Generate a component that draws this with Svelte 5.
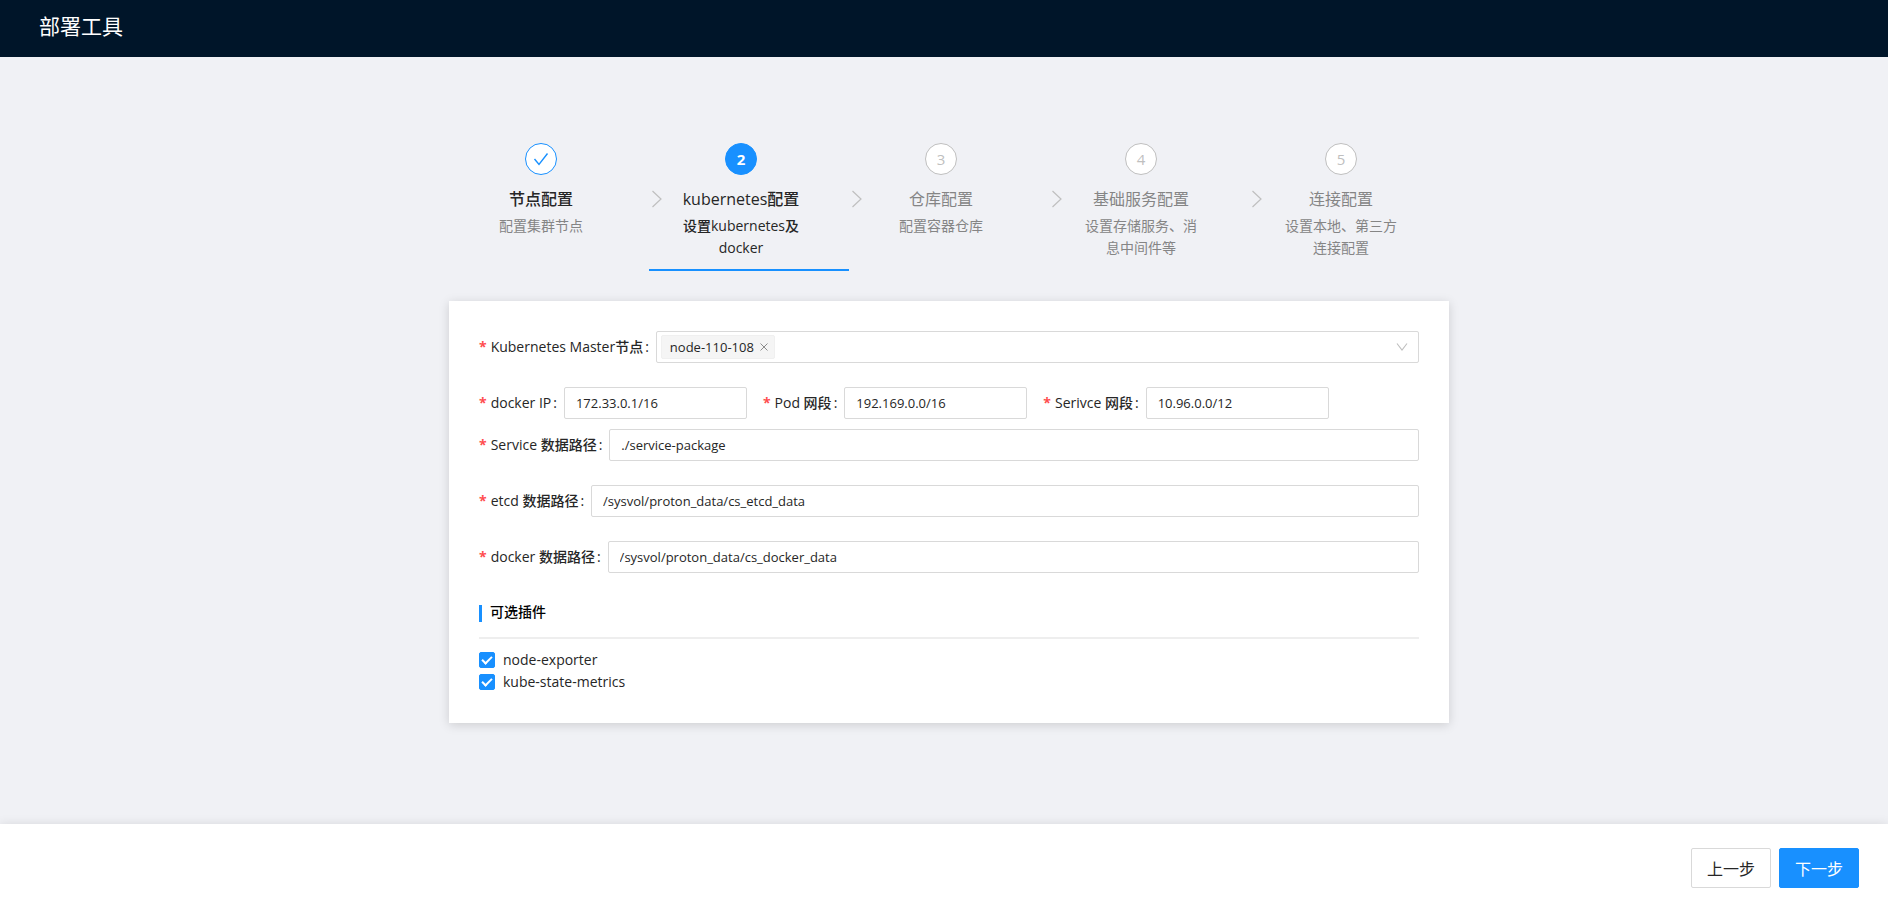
<script lang="ts">
  type Step = { title: string; desc: string };

  const steps: Step[] = [
    { title: '节点配置', desc: '配置集群节点' },
    { title: 'kubernetes配置', desc: '设置kubernetes及docker' },
    { title: '仓库配置', desc: '配置容器仓库' },
    { title: '基础服务配置', desc: '设置存储服务、消息中间件等' },
    { title: '连接配置', desc: '设置本地、第三方连接配置' }
  ];

  const nodes = ['node-110-108', 'node-110-109', 'node-110-110'];

  let current = $state(1);
  let masters = $state(['node-110-108']);

  let networks = $state([
    { id: 'docker-ip', label: 'docker IP', value: '172.33.0.1/16' },
    { id: 'pod-cidr', label: 'Pod 网段', value: '192.169.0.0/16' },
    { id: 'service-cidr', label: 'Serivce 网段', value: '10.96.0.0/12' }
  ]);

  let paths = $state([
    { id: 'service-path', label: 'Service 数据路径', value: './service-package' },
    { id: 'etcd-path', label: 'etcd 数据路径', value: '/sysvol/proton_data/cs_etcd_data' },
    { id: 'docker-path', label: 'docker 数据路径', value: '/sysvol/proton_data/cs_docker_data' }
  ]);

  let plugins = $state([
    { name: 'node-exporter', checked: true },
    { name: 'kube-state-metrics', checked: true }
  ]);

  function status(i: number) {
    if (i < current) return 'finish';
    return i === current ? 'process' : 'wait';
  }

  function removeMaster(name: string) {
    masters = masters.filter((m) => m !== name);
  }

  function addMaster(e: Event) {
    const select = e.currentTarget as HTMLSelectElement;
    if (select.value && !masters.includes(select.value)) {
      masters = [...masters, select.value];
    }
    select.value = '';
  }

  function prev() {
    current = Math.max(0, current - 1);
  }

  function next() {
    current = Math.min(steps.length - 1, current + 1);
  }
</script>

<div class="layout">
  <header class="header">
    <h1>部署工具</h1>
  </header>

  <main class="main">
    <ol class="steps">
      {#each steps as step, i}
        <li class="step {status(i)}">
          {#if i > 0}
            <svg class="step-arrow" width="12" height="18" viewBox="0 0 12 18" fill="none">
              <path d="M1.5 1l8.5 8-8.5 8" stroke="currentColor" stroke-width="1.2" />
            </svg>
          {/if}
          <div class="step-body">
            <span class="step-icon">
              {#if i < current}
                <svg width="16" height="16" viewBox="0 0 16 16" fill="none">
                  <path d="M1.5 8l4.5 5.5L14.5 2.5" stroke="currentColor" stroke-width="1.4" />
                </svg>
              {:else}
                {i + 1}
              {/if}
            </span>
            <div class="step-title">{step.title}</div>
            <div class="step-desc">{step.desc}</div>
          </div>
        </li>
      {/each}
    </ol>

    <form class="card" onsubmit={(e) => e.preventDefault()}>
      <div class="field">
        <label for="masters">Kubernetes Master节点</label>
        <div class="multi-select">
          {#each masters as name}
            <span class="tag">
              {name}
              <button type="button" aria-label="移除 {name}" onclick={() => removeMaster(name)}>
                <svg width="8" height="8" viewBox="0 0 8 8" fill="none">
                  <path d="M0.5 0.5l7 7M7.5 0.5l-7 7" stroke="currentColor" />
                </svg>
              </button>
            </span>
          {/each}
          <select id="masters" onchange={addMaster}>
            <option value=""></option>
            {#each nodes as node}
              <option value={node}>{node}</option>
            {/each}
          </select>
          <svg class="chevron" width="12" height="12" viewBox="0 0 12 12" fill="none">
            <path d="M1 2.5l5 6.5 5-6.5" stroke="currentColor" stroke-width="1.1" />
          </svg>
        </div>
      </div>

      <div class="inline-fields">
        {#each networks as item}
          <div class="field">
            <label for={item.id}>{item.label}</label>
            <input id={item.id} type="text" bind:value={item.value} />
          </div>
        {/each}
      </div>

      {#each paths as item}
        <div class="field">
          <label for={item.id}>{item.label}</label>
          <input id={item.id} type="text" bind:value={item.value} />
        </div>
      {/each}

      <h2>可选插件</h2>
      <div class="plugins">
        {#each plugins as plugin}
          <label class="checkbox">
            <input type="checkbox" bind:checked={plugin.checked} />
            {plugin.name}
          </label>
        {/each}
      </div>
    </form>
  </main>

  <footer class="footer">
    <button class="btn" type="button" onclick={prev}>上一步</button>
    <button class="btn primary" type="button" onclick={next}>下一步</button>
  </footer>
</div>

<style>
  :global(body) {
    margin: 0;
  }

  .layout {
    display: flex;
    flex-direction: column;
    min-height: 100vh;
    background: #f0f1f5;
    color: #262626;
    font-family: 'Open Sans', 'Noto Sans CJK SC', sans-serif;
    font-size: 14px;
    line-height: 22px;
  }

  .layout :is(input, select, button) {
    font-family: inherit;
    font-size: 13px;
    color: inherit;
    box-sizing: border-box;
  }

  .header {
    height: 57px;
    padding: 0 39px;
    background: #001529;
    color: #fff;
  }

  .header h1 {
    margin: 0;
    font-size: 21px;
    font-weight: 400;
    line-height: 52px;
  }

  .main {
    flex: 1;
    box-sizing: border-box;
    width: 100%;
    max-width: 1010px;
    margin: 0 auto;
    padding: 86px 0 40px 10px;
  }

  /* Steps */
  .steps {
    display: grid;
    grid-template-columns: repeat(5, 1fr);
    margin: 0 0 30px;
    padding: 0;
    list-style: none;
  }

  .step {
    display: grid;
    grid-template-columns: 16px 1fr 32px;
    padding-bottom: 10px;
    border-bottom: 2px solid transparent;
    color: #858585;
  }

  .step-arrow {
    grid-column: 1;
    margin: 47px 0 0 2px;
    color: #bfbfbf;
  }

  .step-body {
    grid-column: 2;
    display: flex;
    flex-direction: column;
    align-items: center;
    text-align: center;
  }

  .step-icon {
    display: flex;
    align-items: center;
    justify-content: center;
    box-sizing: border-box;
    width: 32px;
    height: 32px;
    border: 1px solid #bfbfbf;
    border-radius: 50%;
    background: #fff;
    color: #bfbfbf;
    font-size: 15px;
  }

  .step-title {
    margin-top: 12px;
    font-size: 16px;
    line-height: 24px;
  }

  .step-desc {
    width: 120px;
    margin-top: 4px;
  }

  .finish .step-icon {
    border-color: #1890ff;
    color: #1890ff;
  }

  .finish .step-title {
    color: #262626;
    font-weight: 500;
  }

  .process {
    border-bottom-color: #1890ff;
    color: #262626;
    font-weight: 500;
  }

  .process .step-icon {
    border-color: #1890ff;
    background: #1890ff;
    color: #fff;
    font-weight: 700;
  }

  /* Form */
  .card {
    padding: 30px;
    background: #fff;
    box-shadow: 0 2px 10px rgba(0, 0, 0, 0.15);
  }

  .field {
    display: flex;
    align-items: center;
    margin-bottom: 24px;
  }

  .field label {
    margin-right: 7px;
    font-weight: 500;
    white-space: nowrap;
  }

  .field label::before {
    content: '*';
    margin-right: 4px;
    color: #ff4d4f;
    font-weight: 700;
  }

  .field label::after {
    content: ':';
    margin-left: 2px;
  }

  .field input {
    flex: 1;
    min-width: 0;
    height: 32px;
    padding: 0 11px;
    border: 1px solid #d9d9d9;
    border-radius: 2px;
    background: #fff;
  }

  .inline-fields {
    display: flex;
    gap: 16px;
    margin-bottom: 10px;
  }

  .inline-fields .field {
    margin-bottom: 0;
  }

  .inline-fields input {
    flex: none;
    width: 183px;
  }

  .multi-select {
    display: flex;
    flex: 1;
    align-items: center;
    box-sizing: border-box;
    height: 32px;
    padding: 0 10px 0 4px;
    border: 1px solid #d9d9d9;
    border-radius: 2px;
  }

  .multi-select select {
    flex: 1;
    height: 24px;
    border: none;
    outline: none;
    appearance: none;
    background: transparent;
  }

  .chevron {
    color: #bfbfbf;
  }

  .tag {
    display: flex;
    align-items: center;
    gap: 6px;
    box-sizing: border-box;
    height: 24px;
    padding: 0 6px 0 8px;
    border: 1px solid #f0f0f0;
    border-radius: 2px;
    background: #f5f5f5;
    font-size: 13px;
  }

  .tag button {
    display: flex;
    padding: 0;
    border: none;
    background: none;
    color: #8c8c8c;
    cursor: pointer;
  }

  h2 {
    margin: 32px 0 15px;
    padding: 0 0 4px 8px;
    border-left: 3px solid #1890ff;
    color: #000;
    font-size: 14px;
    font-weight: 500;
    line-height: 13px;
  }

  .plugins {
    display: flex;
    flex-direction: column;
    padding-top: 10px;
    border-top: 2px solid #eee;
  }

  .checkbox {
    display: flex;
    align-items: center;
    gap: 8px;
    align-self: flex-start;
    font-weight: 500;
  }

  .checkbox input {
    display: flex;
    justify-content: center;
    width: 16px;
    height: 16px;
    margin: 0;
    border: 1px solid #d9d9d9;
    border-radius: 2px;
    appearance: none;
    background: #fff;
  }

  .checkbox input:checked {
    border-color: #1890ff;
    background: #1890ff;
  }

  .checkbox input:checked::after {
    content: '';
    width: 4px;
    height: 8px;
    margin-top: 1px;
    border: solid #fff;
    border-width: 0 2px 2px 0;
    transform: rotate(45deg);
  }

  /* Footer */
  .footer {
    display: flex;
    justify-content: flex-end;
    gap: 8px;
    padding: 24px 29px 15px;
    background: #fff;
    box-shadow: 0 0 10px rgba(0, 0, 0, 0.1);
  }

  .layout .btn {
    width: 80px;
    height: 40px;
    padding: 0;
    border: 1px solid #d9d9d9;
    border-radius: 2px;
    background: #fff;
    font-size: 16px;
    cursor: pointer;
  }

  .layout .btn.primary {
    border-color: #1890ff;
    background: #1890ff;
    color: #fff;
  }
</style>
